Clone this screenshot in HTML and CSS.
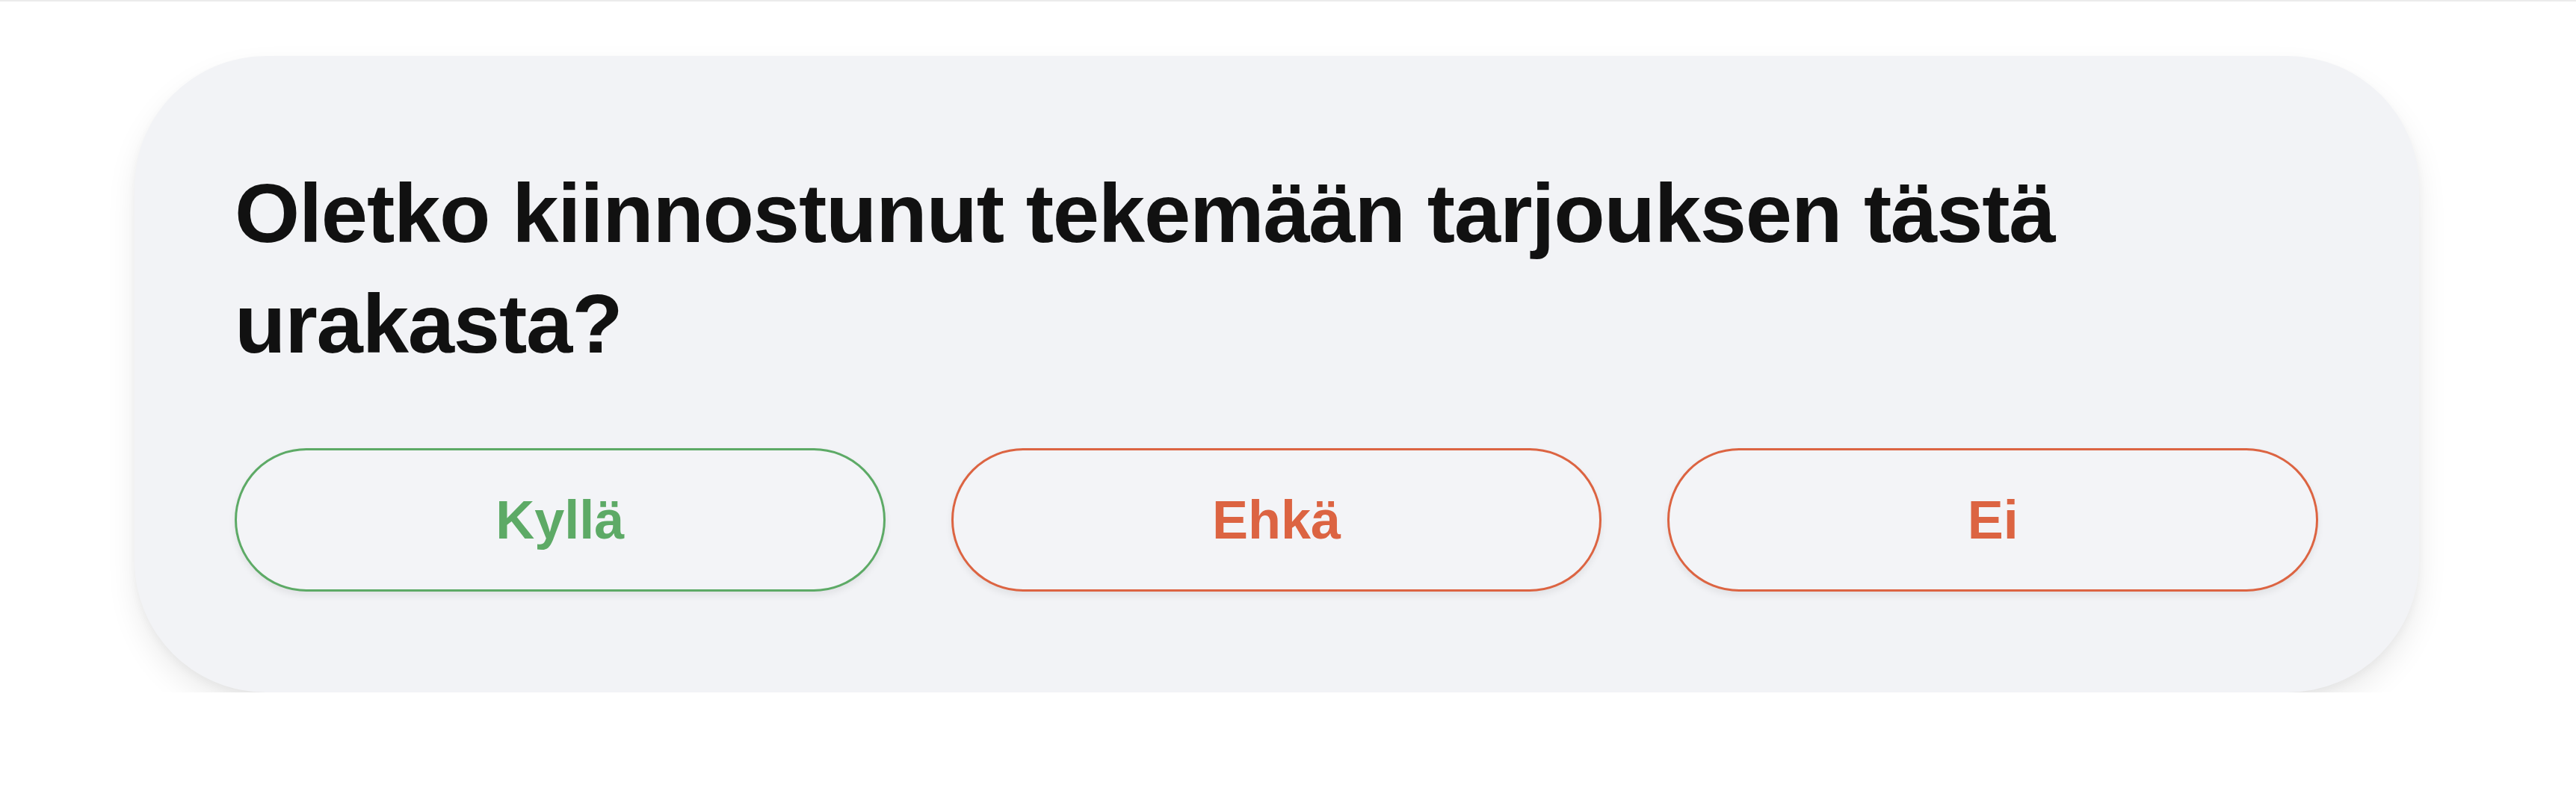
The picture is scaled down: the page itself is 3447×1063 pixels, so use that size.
FILE: index.html
```html
<!DOCTYPE html>
<html lang="fi">
<head>
<meta charset="utf-8">
<title>Tarjous</title>
<link rel="stylesheet" href="styles.css">
</head>
<body>
<div class="page">
  <section class="card">
    <h2 class="question">Oletko kiinnostunut tekemään tarjouksen tästä urakasta?</h2>
    <div class="choices">
      <button class="choice choice-yes" type="button">Kyllä</button>
      <button class="choice choice-maybe" type="button">Ehkä</button>
      <button class="choice choice-no" type="button">Ei</button>
    </div>
  </section>
</div>
</body>
</html>
```
FILE: styles.css
```css
html, body {
  margin: 0;
  padding: 0;
  background: #ffffff;
}

.page {
  border-top: 2px solid #ebebeb;
  padding: 73px 0 0 180px;
  font-family: "Liberation Sans", Arial, Helvetica, sans-serif;
}

.card {
  width: 3057px;
  box-sizing: border-box;
  padding: 137px 135px 135px 134px;
  background: #f2f3f6;
  border-radius: 176px;
  box-shadow: 0 20px 40px rgba(0, 0, 0, 0.08), 0 6px 12px rgba(0, 0, 0, 0.04);
}

.question {
  margin: 0;
  font-size: 112px;
  line-height: 148px;
  letter-spacing: -1.2px;
  font-weight: 700;
  color: #111111;
}

.choices {
  margin-top: 92px;
  display: grid;
  grid-template-columns: repeat(3, 1fr);
  gap: 88px;
}

.choice {
  height: 192px;
  border-radius: 999px;
  border: 3px solid currentColor;
  background: #f3f4f7;
  font-family: "Liberation Sans", Arial, Helvetica, sans-serif;
  font-size: 72px;
  font-weight: 700;
  box-shadow: 0 5px 10px rgba(0, 0, 0, 0.07);
  cursor: pointer;
}

.choice-yes {
  color: #5daa66;
}

.choice-maybe,
.choice-no {
  color: #dc6442;
}
```
